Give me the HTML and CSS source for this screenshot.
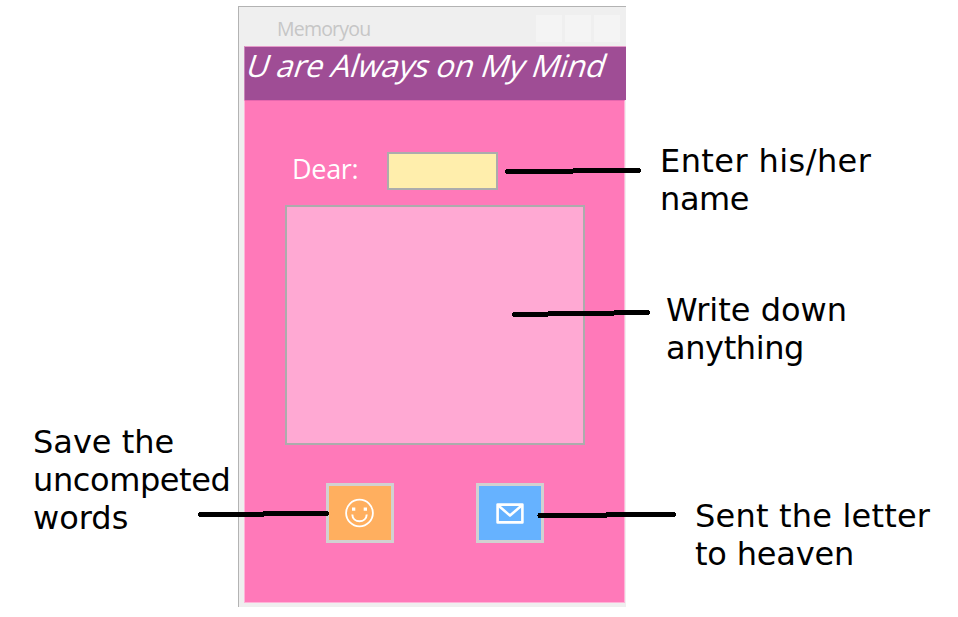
FILE: index.html
```
<!DOCTYPE html>
<html lang="en">
<head>
<meta charset="utf-8">
<title>Memoryou</title>
<link rel="stylesheet" href="styles.css">
</head>
<body>
<main class="guide">
  <aside class="notes notes-left">
    <p class="note save">Save the<br><span class="tight">uncompeted</span><br>words</p>
  </aside>
  <section class="window">
    <header class="titlebar">
      <span class="app-name">Memoryou</span>
      <div class="controls"><i></i><i></i><i></i></div>
    </header>
    <h1 class="banner"><span>U are Always on My Mind</span></h1>
    <div class="content">
      <div class="field"><span class="dear">Dear:</span><div class="name-box"></div></div>
      <div class="letter"></div>
      <div class="actions">
        <div class="button smile">
          <svg width="30" height="30" viewBox="0 0 30 30" fill="none" stroke="#fff"><circle cx="14.500" cy="15" r="13.4" stroke-width="1.8"/><path d="M7.300 16.500C7.500 25.500 21.500 25.500 21.700 16.500" stroke-width="2"/><path d="M7 9.500h3.300v3.300h-3.300zM18.700 9.500h3.300v3.300h-3.300z" fill="#fff" stroke="none"/></svg>
        </div>
        <div class="button mail">
          <svg width="28" height="21" viewBox="0 0 28 21" fill="none" stroke="#fff" stroke-width="2.600" stroke-linejoin="round"><rect x="1.6" y="1.6" width="24.8" height="17.8"/><path d="M2 2.200l12 10.400L26 2.200"/></svg>
        </div>
      </div>
    </div>
  </section>
  <aside class="notes notes-right">
    <p class="note enter"><span class="wide">Enter his/her</span><br><span class="tight">name</span></p>
    <p class="note write">Write down<br><span class="tight">anything</span></p>
    <p class="note send"><span class="roomy">Sent the letter</span><br><span class="snug">to heaven</span></p>
  </aside>
  <svg class="pointers" width="958" height="617" viewBox="0 0 958 617" fill="none" stroke="#000" stroke-width="5" stroke-linecap="round" shape-rendering="crispEdges">
    <path d="M507.500 171.500H571M575 170.500H638.500"/>
    <path d="M514.500 314.500H546M550 313.500H612M616 312.500H647.500"/>
    <path d="M200.500 514.500H262M265 513.500H326.500"/>
    <path d="M540 515.500H605M608 514.500H673.500"/>
  </svg>
</main>
</body>
</html>
```

FILE: styles.css
```
* { box-sizing: border-box; }
body { margin: 0; background: #fff; }
.guide {
  position: relative;
  display: grid;
  grid-template-columns: 238px 388px 332px;
  width: 958px;
  height: 617px;
  overflow: hidden;
}
.note {
  margin: 0;
  font: 32px/38px "DejaVu Sans", Verdana, sans-serif;
  color: #000;
  white-space: nowrap;
}
.wide { letter-spacing: 0.42px; }
.roomy { letter-spacing: 0.2px; }
.snug { letter-spacing: -0.2px; }
.tight { letter-spacing: -0.4px; }
.notes-left { padding: 423px 0 0 33px; }
.notes-right { padding-top: 142px; }
.enter { margin-left: 34px; }
.write { margin: 73px 0 0 40px; }
.send { margin: 130px 0 0 69px; }
.window {
  display: flex;
  flex-direction: column;
  height: 601px;
  margin-top: 6px;
  padding: 0 0 4px 5px;
  background: #efefef;
  border-top: 1px solid #b3b3b3;
  border-left: 1px solid #b3b3b3;
}
.titlebar {
  display: flex;
  justify-content: space-between;
  height: 39px;
  padding: 8px 6px 0 33px;
}
.app-name {
  font: 19.5px/28px "Open Sans", "Noto Sans", sans-serif;
  letter-spacing: -0.8px;
  color: #c6c6c6;
}
.controls { display: flex; gap: 3px; }
.controls i { width: 26px; height: 27px; background: #f4f4f4; }
.banner {
  height: 54px;
  margin: 0;
  padding: 0 0 0 3px;
  border-top: 1px solid #e59bc9;
  border-left: 1px solid #c885b8;
  background: #9f4d95;
  color: #fff;
  font: 31px/37px "Open Sans", "Noto Sans", sans-serif;
  white-space: nowrap;
}
.banner span {
  display: inline-block;
  transform: skewX(-18deg);
  letter-spacing: -0.25px;
}
.content {
  flex: 1;
  margin-right: 1px;
  padding: 51px 0 0 41px;
  background: #ff79b9;
  border: 1px solid #ffb4d8;
  border-top-color: #e667ae;
}
.field { display: flex; height: 37px; }
.dear {
  width: 101px;
  padding-left: 6px;
  color: #fff;
  font: 27px/33px "Open Sans", "Noto Sans", sans-serif;
  letter-spacing: -0.3px;
}
.name-box { width: 111px; height: 38px; background: #ffeeac; border: 2px solid #acacac; }
.letter {
  width: 300px;
  height: 240px;
  margin: 16px 0 0 -1px;
  background: #ffa9d3;
  border: 2px solid #acacac;
}
.actions { display: flex; gap: 82px; margin: 38px 0 0 40px; }
.button {
  display: flex;
  align-items: center;
  justify-content: center;
  width: 68px;
  height: 60px;
  border: 3px solid #d1d1d1;
}
.smile { background: #ffaf5f; }
.mail { background: #66b2ff; }
.pointers { position: absolute; top: 0; left: 0; }
```
